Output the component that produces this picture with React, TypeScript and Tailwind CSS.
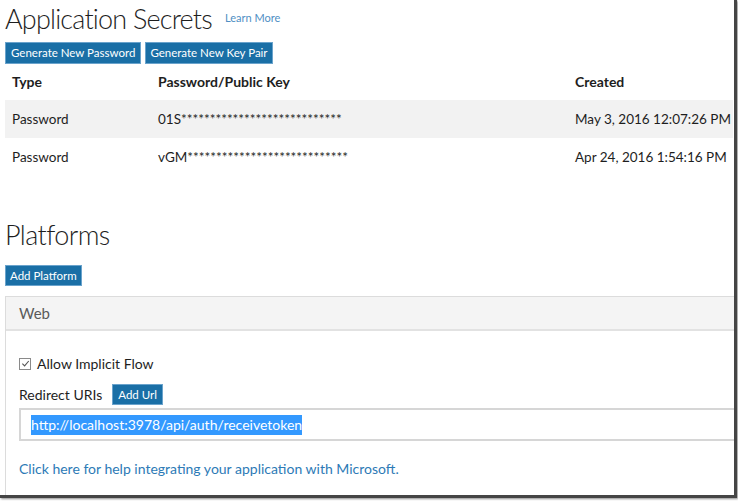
import React from "react";

interface ISecret {
  type: string;
  key: string;
  created: string;
}

const secrets: ISecret[] = [
  { type: "Password", key: "01S" + "*".repeat(28), created: "May 3, 2016 12:07:26 PM" },
  { type: "Password", key: "vGM" + "*".repeat(28), created: "Apr 24, 2016 1:54:16 PM" },
];

const btn =
  "bg-[#1a6fa6] text-white border border-[#6aa3cc] text-[11.5px] leading-none flex items-center";

const App: React.FC = () => {
  return (
    <div
      className="w-[738px] h-[502px] bg-white overflow-hidden text-[#1e1e1e]"
      style={{ fontFamily: '"Segoe UI", Lato, "Liberation Sans", sans-serif' }}
    >
      <div className="w-[737px] h-[498px] border-r-[3px] border-b-[3px] border-[#454545] shadow-[1px_1px_2px_rgba(0,0,0,0.45)] overflow-hidden pl-[5px]">
        {/* secrets */}
        <div className="flex items-end gap-[13px] h-[36px]">
          <h1 className="text-[27px] font-light leading-[34px] tracking-[-0.8px]">Application Secrets</h1>
          <a className="text-[11px] text-[#4f8fc4] mb-[10px]">Learn More</a>
        </div>
        <div className="flex gap-[4px] mt-[6px]">
          <button className={`${btn} h-[22px] px-[5px]`}>Generate New Password</button>
          <button className={`${btn} h-[22px] px-[4px]`}>Generate New Key Pair</button>
        </div>

        <table className="w-[728px] mt-[8px] text-[13.5px] border-collapse">
          <thead>
            <tr className="h-[28px] text-left text-[14px] leading-[20px]">
              <th className="font-bold pl-[7px] w-[153px] align-top">Type</th>
              <th className="font-bold align-top">Password/Public Key</th>
              <th className="font-bold w-[158px] align-top">Created</th>
            </tr>
          </thead>
          <tbody>
            {secrets.map((s, i) => (
              <tr key={i} className={`h-[38px] ${i === 0 ? "bg-[#f2f2f2]" : ""}`}>
                <td className="pl-[7px]">{s.type}</td>
                <td>{s.key}</td>
                <td className="whitespace-nowrap">{s.created}</td>
              </tr>
            ))}
          </tbody>
        </table>

        {/* platforms */}
        <h2 className="text-[27px] font-light leading-[32px] tracking-[-0.6px] mt-[43px]">Platforms</h2>
        <button className={`${btn} h-[21px] px-[4px] mt-[14px]`}>Add Platform</button>

        <div className="w-[760px] mt-[10px] border border-[#dcdcdc] border-b-[#d0d0d0]">
          <div className="h-[34px] bg-[#f4f4f4] border-b-2 border-[#e2e2e2] flex items-center pl-[13px] text-[15px] text-[#5a5a5a]">
            Web
          </div>
          <div className="pl-[13px] pt-[22px] pb-[17px]">
            <label className="flex items-center gap-[6px] text-[14px]">
              <span className="w-[12px] h-[12px] border border-[#8a8a8a] flex items-center justify-center">
                <svg viewBox="0 0 10 10" className="w-[9px] h-[9px]">
                  <path d="M1.5 5.2 L4 7.6 L8.6 2.2" fill="none" stroke="#555" strokeWidth="1.2" />
                </svg>
              </span>
              Allow Implicit Flow
            </label>
            <div className="flex items-center gap-[10px] mt-[10px] text-[14px]">
              <span>Redirect URIs</span>
              <button className={`${btn} h-[21px] px-[5px]`}>Add Url</button>
            </div>
            <div className="mt-[3px] h-[33px] border-2 border-[#d6d6d6] flex items-center pl-[10px] text-[14px]">
              <span className="bg-[#3399ff] text-white leading-[20px]">http://localhost:3978/api/auth/receivetoken</span>
            </div>
            <a className="block mt-[17px] text-[14px] text-[#2d7ab6]">
              Click here for help integrating your application with Microsoft.
            </a>
          </div>
        </div>
      </div>
    </div>
  );
};

export default App;
